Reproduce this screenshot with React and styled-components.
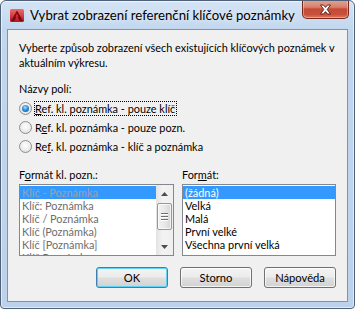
import styled, { createGlobalStyle } from 'styled-components';

const GlobalStyle = createGlobalStyle`
  body {
    margin: 0;
    font-family: Lato, 'Liberation Sans', Arial, sans-serif;
    background: #fff;
  }
`;

const uiFont = `Lato, 'Liberation Sans', Arial, sans-serif`;

const Window = styled.div`
  width: 355px;
  height: 309px;
  box-sizing: border-box;
  display: flex;
  flex-direction: column;
  border: 1px solid #4e6178;
  border-radius: 6px 6px 4px 4px;
  background: linear-gradient(to bottom, #d4e4f5 0%, #c2d7ee 28px, #bbd2ea 100%);
  box-shadow: inset 0 0 0 1px rgba(255, 255, 255, 0.55);
  overflow: hidden;
`;

const TitleBar = styled.div`
  display: flex;
  align-items: center;
  height: 28px;
  flex-shrink: 0;
  padding-left: 8px;
`;

const Title = styled.span`
  flex: 1;
  margin-left: 5px;
  font-family: ${uiFont};
  font-size: 13.2px;
  line-height: 15px;
  color: #000;
  white-space: nowrap;
  text-shadow: 0 0 6px rgba(255, 255, 255, 0.9);
`;

const CloseButton = styled.div`
  align-self: flex-start;
  width: 47px;
  height: 19px;
  margin: -1px 5px 0 0;
  box-sizing: border-box;
  border: 1px solid #7a2619;
  border-top: none;
  border-radius: 0 0 5px 5px;
  background: linear-gradient(to bottom, #e4a592 0%, #d8806c 40%, #c44a36 50%, #c7503c 80%, #dd7a5e 100%);
  box-shadow: inset 0 0 0 1px rgba(255, 220, 210, 0.45);
  display: flex;
  align-items: center;
  justify-content: center;
`;

const Client = styled.div`
  flex: 1;
  margin: 0 6px 6px;
  border: 1px solid #8393a7;
  background: #f0f0f0;
  padding: 10px 11px 13px;
  display: flex;
  flex-direction: column;
  font-family: ${uiFont};
  font-size: 10.9px;
  color: #000;
`;

const Description = styled.p`
  margin: 0;
  line-height: 15px;
  white-space: nowrap;
`;

const Label = styled.div`
  line-height: 15px;
  margin-top: ${p => p.$top || 0}px;
`;

const Key = styled.span`
  text-decoration: underline;
`;

const RadioGroup = styled.div`
  margin-top: 3px;
  display: flex;
  flex-direction: column;
`;

const RadioRow = styled.div`
  display: flex;
  align-items: center;
  height: 19px;
`;

const Radio = styled.span`
  width: 13px;
  height: 13px;
  box-sizing: border-box;
  border-radius: 50%;
  border: 1px solid #8f8f8f;
  background: radial-gradient(circle at 50% 40%, #ffffff 0%, #ececec 55%, #d4d4d4 100%);
  display: flex;
  align-items: center;
  justify-content: center;

  &::after {
    content: '';
    width: 7px;
    height: 7px;
    border-radius: 50%;
    background: ${p =>
      p.$checked
        ? 'radial-gradient(circle at 45% 35%, #a9e4ff 0%, #2f8fd8 45%, #0d4e8e 100%)'
        : 'transparent'};
  }
`;

const RadioText = styled.span`
  margin-left: 2px;
  line-height: 13px;
  border: 1px dotted ${p => (p.$focused ? '#000' : 'transparent')};
  padding: 0 1px 0 0;
  white-space: nowrap;
`;

const Columns = styled.div`
  margin-top: 11px;
  display: grid;
  grid-template-columns: 155px 154px;
  column-gap: 8px;
`;

const ListBox = styled.div`
  margin-top: 2px;
  height: 72px;
  box-sizing: border-box;
  border: 1px solid #828790;
  background: #fff;
  display: flex;
  overflow: hidden;
`;

const Items = styled.div`
  flex: 1;
  padding-top: 1px;
  overflow: hidden;
`;

const Item = styled.div`
  height: 13px;
  line-height: 13px;
  padding-left: 2px;
  white-space: nowrap;
  background: ${p => (p.$selected ? '#3399ff' : 'transparent')};
  color: ${p => {
    if (p.$disabled) return p.$selected ? '#96a3b2' : '#6d6d6d';
    return p.$selected ? '#fff' : '#000';
  }};
`;

const ScrollBar = styled.div`
  width: 17px;
  display: flex;
  flex-direction: column;
  background: linear-gradient(to right, #e3e3e3, #f3f3f3 40%, #efefef);
`;

const Arrow = styled.div`
  height: 17px;
  display: flex;
  align-items: center;
  justify-content: center;
`;

const Track = styled.div`
  flex: 1;
  padding-top: 1px;
  display: flex;
  justify-content: center;
`;

const Thumb = styled.div`
  width: 15px;
  height: 27px;
  box-sizing: border-box;
  border: 1px solid #979797;
  border-radius: 2px;
  background: linear-gradient(to right, #f2f2f2, #e8e8e8 50%, #d6d6d6);
  box-shadow: inset 0 0 0 1px rgba(255, 255, 255, 0.7);
  display: flex;
  flex-direction: column;
  align-items: center;
  justify-content: center;
  gap: 2px;
`;

const Grip = styled.span`
  width: 7px;
  height: 1px;
  background: #6e6e6e;
  box-shadow: 0 1px 0 #fff;
`;

const ButtonRow = styled.div`
  margin-top: auto;
  display: flex;
  justify-content: flex-end;
  gap: 12px;
`;

const Button = styled.button`
  width: 72px;
  height: 21px;
  box-sizing: border-box;
  padding: 0;
  border: 1px solid ${p => (p.$default ? '#3c7fb1' : '#707070')};
  border-radius: 3px;
  background: linear-gradient(to bottom, #f4f4f4 0%, #ececec 45%, #dedede 55%, #d2d2d2 100%);
  box-shadow: inset 0 0 0 1px ${p => (p.$default ? '#5fd3f5' : 'rgba(255,255,255,0.75)')};
  font-family: ${uiFont};
  font-size: 11.2px;
  color: #000;
`;

function AppIcon() {
  return (
    <svg width="16" height="16" viewBox="0 0 16 16">
      <defs>
        <linearGradient id="icoBg" x1="0" y1="0" x2="0" y2="1">
          <stop offset="0" stopColor="#f06a6a" />
          <stop offset="1" stopColor="#b8141c" />
        </linearGradient>
      </defs>
      <rect x="1" y="2" width="14" height="13" rx="1.5" fill="url(#icoBg)" />
      <polygon points="8,3.5 14,14 10.6,14 8,9 5.4,14 2,14" fill="#7e0a10" />
      <polygon points="8,6.5 9.5,9.8 6.5,9.8" fill="#d83038" />
    </svg>
  );
}

function CloseGlyph() {
  return (
    <svg width="13" height="11" viewBox="0 0 13 11">
      <path
        d="M1.5 1 L4.5 1 L6.5 3.4 L8.5 1 L11.5 1 L8.2 5.5 L11.5 10 L8.5 10 L6.5 7.6 L4.5 10 L1.5 10 L4.8 5.5 Z"
        fill="#fff"
        stroke="#4a1a12"
        strokeWidth="0.9"
        strokeLinejoin="round"
      />
    </svg>
  );
}

function ArrowGlyph({ down }) {
  return (
    <svg width="7" height="4" viewBox="0 0 7 4">
      <polygon points={down ? '0,0 7,0 3.5,4' : '3.5,0 7,4 0,4'} fill="#4d4d4d" />
    </svg>
  );
}

const keyFormats = [
  'Klíč - Poznámka',
  'Klíč: Poznámka',
  'Klíč / Poznámka',
  'Klíč (Poznámka)',
  'Klíč [Poznámka]',
  'Klíč Poznámka',
];

const caseFormats = ['(žádná)', 'Velká', 'Malá', 'První velké', 'Všechna první velká'];

export default function App() {
  return (
    <>
      <GlobalStyle />
      <Window>
        <TitleBar>
          <AppIcon />
          <Title>Vybrat zobrazení referenční klíčové poznámky</Title>
          <CloseButton>
            <CloseGlyph />
          </CloseButton>
        </TitleBar>
        <Client>
          <Description>
            Vyberte způsob zobrazení všech existujících klíčových poznámek v
            <br />
            aktuálním výkresu.
          </Description>

          <Label $top={11}>Názvy polí:</Label>
          <RadioGroup>
            <RadioRow>
              <Radio $checked />
              <RadioText $focused>
                <Key>R</Key>ef. kl. poznámka - pouze klíč
              </RadioText>
            </RadioRow>
            <RadioRow>
              <Radio />
              <RadioText>
                R<Key>e</Key>f. kl. poznámka - pouze pozn.
              </RadioText>
            </RadioRow>
            <RadioRow>
              <Radio />
              <RadioText>
                Re<Key>f</Key>. kl. poznámka - klíč a poznámka
              </RadioText>
            </RadioRow>
          </RadioGroup>

          <Columns>
            <div>
              <Label>
                F<Key>o</Key>rmát kl. pozn.:
              </Label>
              <ListBox>
                <Items>
                  {keyFormats.map((f, i) => (
                    <Item key={f} $disabled $selected={i === 0}>
                      {f}
                    </Item>
                  ))}
                </Items>
                <ScrollBar>
                  <Arrow>
                    <ArrowGlyph />
                  </Arrow>
                  <Track>
                    <Thumb>
                      <Grip />
                      <Grip />
                      <Grip />
                    </Thumb>
                  </Track>
                  <Arrow>
                    <ArrowGlyph down />
                  </Arrow>
                </ScrollBar>
              </ListBox>
            </div>
            <div>
              <Label>
                For<Key>m</Key>át:
              </Label>
              <ListBox>
                <Items>
                  {caseFormats.map((f, i) => (
                    <Item key={f} $selected={i === 0}>
                      {f}
                    </Item>
                  ))}
                </Items>
              </ListBox>
            </div>
          </Columns>

          <ButtonRow>
            <Button $default>OK</Button>
            <Button>Storno</Button>
            <Button>Nápověda</Button>
          </ButtonRow>
        </Client>
      </Window>
    </>
  );
}
